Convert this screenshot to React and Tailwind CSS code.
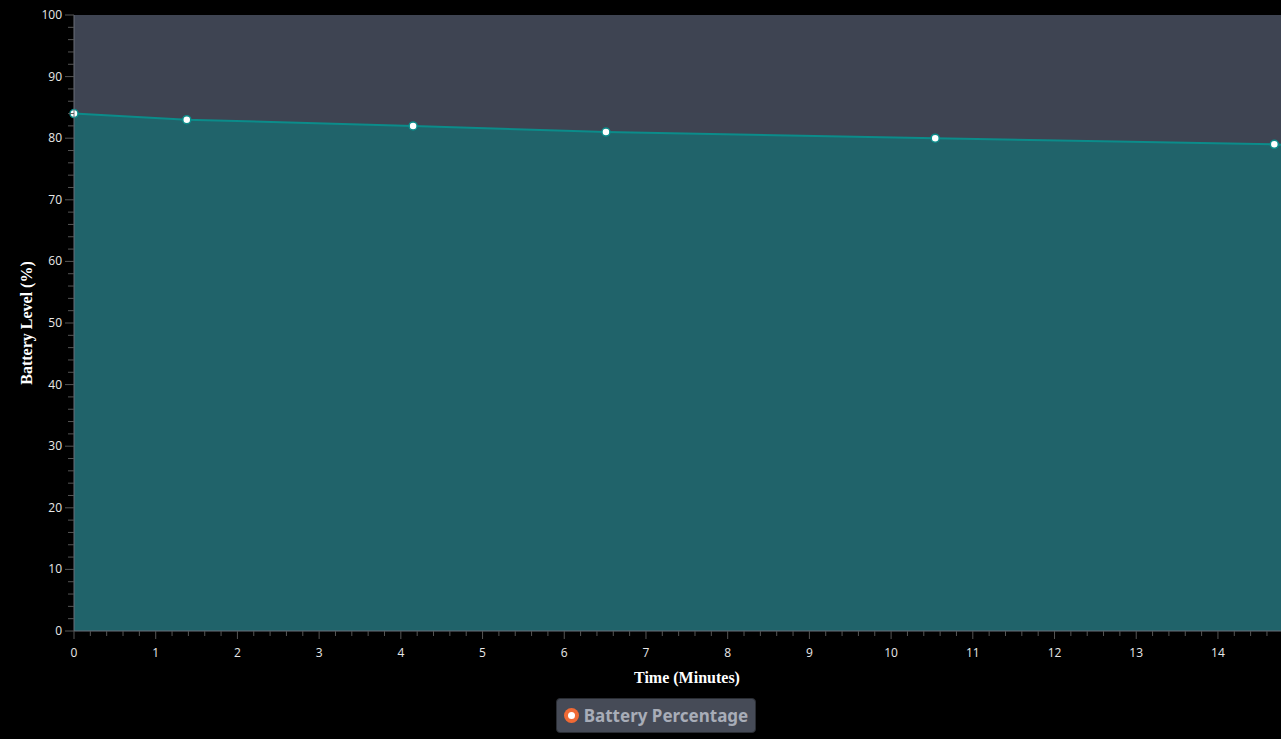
import React from "react";

const X0 = 74, Y0 = 631, Y100 = 15, PX = 81.71;
const sx = (m) => X0 + m * PX;
const sy = (v) => Y0 - (v / 100) * (Y0 - Y100);
const pts = [[0, 84], [1.38, 83], [4.15, 82], [6.51, 81], [10.54, 80], [14.69, 79]];
const XEND = 1281;

export default function App() {
  const line = pts.map(([m, v]) => `${sx(m)},${sy(v)}`).join(" L");
  const lastY = sy(78.95);
  const area = `M${X0},${Y0} L${line} L${XEND},${lastY} L${XEND},${Y0} Z`;
  const yMinor = [];
  for (let v = 0; v <= 100; v += 2) yMinor.push(v);
  const xMinor = [];
  for (let i = 0; i <= 74; i++) xMinor.push(i * 0.2);
  return (
    <div className="w-[1281px] h-[739px] bg-black flex flex-col items-center overflow-hidden">
      <svg width="1281" height="695" className="block shrink-0">
        <rect x={X0} y={Y100} width={XEND - X0} height={Y0 - Y100} fill="#3e4452" />
        <path d={area} fill="#20636a" />
        <path d={`M${line} L${XEND},${lastY}`} fill="none" stroke="#0b8c8a" strokeWidth="2" />
        {pts.map(([m, v], i) => (
          <circle key={i} cx={sx(m)} cy={sy(v)} r="4" fill="#fff" stroke="#0b8c8a" strokeWidth="1.5" />
        ))}
        <line x1={X0} y1={Y100} x2={X0} y2={Y0} stroke="#6b6f78" strokeWidth="1" />
        <line x1={X0} y1={Y0} x2={XEND} y2={Y0} stroke="#6b6f78" strokeWidth="1" />
        {yMinor.map((v) => (
          <line key={v} x1={v % 10 === 0 ? X0 - 9 : X0 - 6} x2={X0} y1={sy(v)} y2={sy(v)} stroke="#555" />
        ))}
        {xMinor.map((m, i) => (
          <line key={i} x1={sx(m)} x2={sx(m)} y1={Y0} y2={i % 5 === 0 ? Y0 + 8 : Y0 + 5} stroke="#555" />
        ))}
        <g fill="#e8e8e8" fontFamily="'Open Sans', sans-serif" fontSize="12">
          {[0, 10, 20, 30, 40, 50, 60, 70, 80, 90, 100].map((v) => (
            <text key={v} x={X0 - 12} y={sy(v) + 4} textAnchor="end">{v}</text>
          ))}
          {Array.from({ length: 15 }, (_, i) => i).map((m) => (
            <text key={m} x={sx(m)} y={657} textAnchor="middle">{m}</text>
          ))}
        </g>
        <text x="687" y="683" textAnchor="middle" fill="#fff" fontFamily="'Liberation Serif', serif" fontWeight="bold" fontSize="16">Time (Minutes)</text>
        <text transform="translate(32,323) rotate(-90)" textAnchor="middle" fill="#fff" fontFamily="'Liberation Serif', serif" fontWeight="bold" fontSize="16">Battery Level (%)</text>
      </svg>
      <div className="mt-[3px] ml-[31px] h-[35px] px-[7px] flex items-center gap-[5px] rounded-[4px] bg-[#464b57] border border-[#2a2d33]">
        <span className="w-[15px] h-[15px] rounded-full bg-[#f06a35] flex items-center justify-center">
          <span className="w-[7px] h-[7px] rounded-full bg-white" />
        </span>
        <span className="text-[#a8adb8] text-[17px] font-bold font-['Liberation_Serif',serif]">Battery Percentage</span>
      </div>
    </div>
  );
}
